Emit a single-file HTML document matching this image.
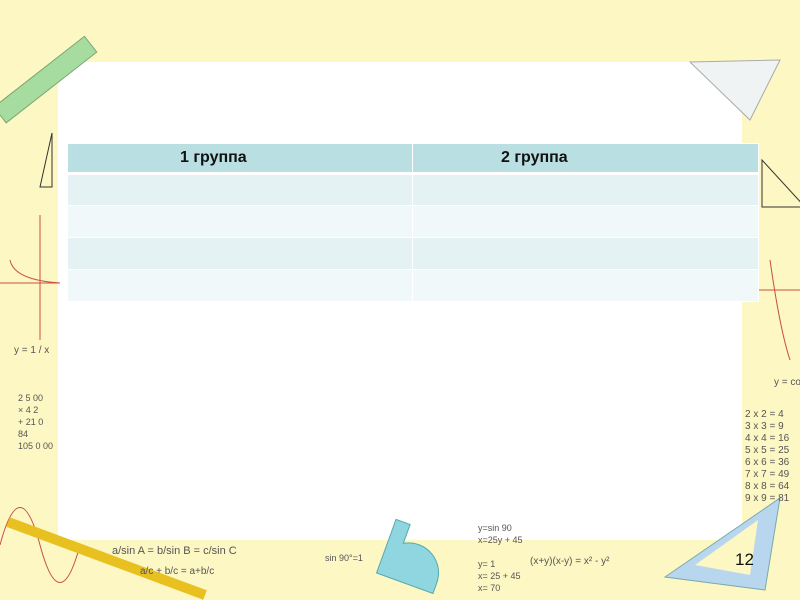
<!DOCTYPE html>
<html><head><meta charset="utf-8"><style>
*{margin:0;padding:0;box-sizing:border-box}
body{width:800px;height:600px;overflow:hidden;background:#fdf7c3;position:relative;font-family:"Liberation Sans",sans-serif}
.white{position:absolute;left:58px;top:62px;width:684px;height:478px;background:#fff}
table{position:absolute;left:67px;top:143px;width:692px;border-collapse:collapse}
td{border:1px solid #fff;height:32px}
th{height:30px;background:#b9dfe2;font-weight:bold;font-size:16px;color:#111;border:1px solid #fff;border-bottom:3px solid #fff;text-align:left}
th.c1{padding-left:112px;width:345px}
th.c2{padding-left:88px}
tr.a td{background:#e5f2f3}
tr.b td{background:#f1f8fa}
.s{position:absolute;font-size:9px;color:#555;font-family:"Liberation Sans Narrow","Liberation Sans",sans-serif;line-height:12px;white-space:nowrap}
.n{position:absolute;left:735px;top:550px;font-size:17px;color:#111}
</style></head><body>
<div class="white"></div>
<svg style="position:absolute;left:0;top:0" width="800" height="600">
<g transform="translate(0,115) rotate(-38)"><rect x="0" y="-10" width="115" height="20" fill="#a7dca0" stroke="#7aa874"/></g>
<polygon points="40,187 52,133 52,187" fill="none" stroke="#333"/>
<polygon points="805,207 762,160 762,207" fill="none" stroke="#333"/>
<polygon points="690,62 780,60 750,120" fill="#f0f3f4" stroke="#aaa"/>
<path d="M10,260 Q14,280 60,283 M0,283 H60 M40,215 V340" stroke="#c85040" fill="none"/>
<path d="M770,260 Q780,330 790,360 M745,290 H800" stroke="#c85040" fill="none"/>
<path d="M0,545 Q20,470 40,545 T80,545" stroke="#c85040" fill="none"/>
<path d="M8,522 L205,595" stroke="#e8c020" stroke-width="10"/>
<g transform="rotate(20 415 555)">
<path d="M385,580 V528 H400 V548 A30,30 0 0 1 445,575 V585 H385 Z" fill="#8fd6e0" stroke="#5aa"/>
</g>
<polygon points="665,577 780,498 765,590" fill="#b8d6ee" stroke="#7aa"/>
<polygon points="695,565 758,520 750,575" fill="#fdf7c3"/>
</svg>
<div class="s" style="left:14px;top:345px;font-size:10px">y = 1 / x</div>
<div class="s" style="left:18px;top:392px">2 5 00<br>× 4 2<br>+ 21 0<br>84<br>105 0 00</div>
<div class="s" style="left:774px;top:377px;font-size:10px">y = co</div>
<div class="s" style="left:745px;top:409px;font-size:10px">2 x 2 = 4<br>3 x 3 = 9<br>4 x 4 = 16<br>5 x 5 = 25<br>6 x 6 = 36<br>7 x 7 = 49<br>8 x 8 = 64<br>9 x 9 = 81</div>
<div class="s" style="left:112px;top:545px;font-size:11px">a/sin A = b/sin B = c/sin C</div>
<div class="s" style="left:140px;top:566px;font-size:10px">a/c + b/c = a+b/c</div>
<div class="s" style="left:325px;top:552px;font-size:9px">sin 90°=1</div>
<div class="s" style="left:478px;top:522px">y=sin 90<br>x=25y + 45<br><br>y= 1<br>x= 25 + 45<br>x= 70</div>
<div class="s" style="left:530px;top:556px;font-size:10px">(x+y)(x-y) = x² - y²</div>
<table>
<tr><th class="c1">1 группа</th><th class="c2">2 группа</th></tr>
<tr class="a"><td></td><td></td></tr>
<tr class="b"><td></td><td></td></tr>
<tr class="a"><td></td><td></td></tr>
<tr class="b"><td></td><td></td></tr>
</table>
<div class="n">12</div>
</body></html>
